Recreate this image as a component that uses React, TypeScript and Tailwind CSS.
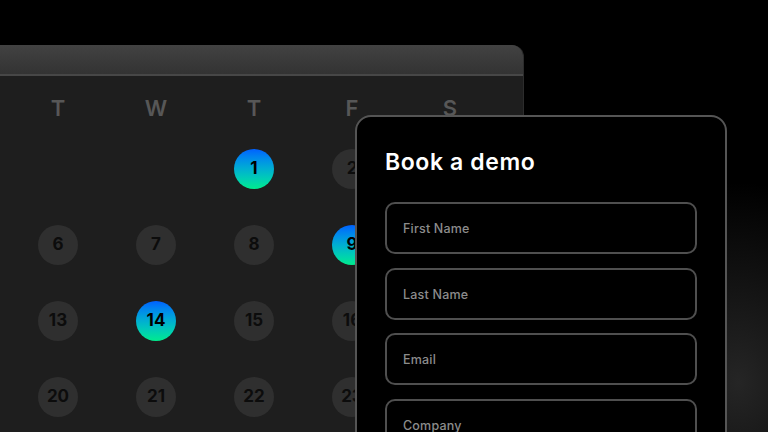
import React from "react";

const headers = ["T", "W", "T", "F", "S"];
type Cell = { n: number | null; hot?: boolean };
const rows: Cell[][] = [
  [{ n: null }, { n: null }, { n: 1, hot: true }, { n: 2 }],
  [{ n: 6 }, { n: 7 }, { n: 8 }, { n: 9, hot: true }],
  [{ n: 13 }, { n: 14, hot: true }, { n: 15 }, { n: 16 }],
  [{ n: 20 }, { n: 21 }, { n: 22 }, { n: 23 }],
];

const fields = ["First Name", "Last Name", "Email", "Company"];

export default function App() {
  return (
    <div
      className="relative w-[768px] h-[432px] overflow-hidden bg-black"
      style={{ fontFamily: "Inter, 'Noto Sans', sans-serif" }}
    >
      <div className="absolute right-[-120px] bottom-[-150px] w-[300px] h-[400px] rounded-full bg-[radial-gradient(closest-side,rgba(62,62,62,0.6),rgba(0,0,0,0))]" />
      {/* Calendar window */}
      <div className="relative mt-[45px] ml-[-20px] w-[544px] h-[400px] rounded-tr-[12px] overflow-hidden bg-[#1e1e1e] border-r border-[#2c2c2c]">
        <div className="h-[31px] bg-gradient-to-b from-[#424242] to-[#333333] border-b-2 border-[#474747]" />
        <div className="pl-[29px] pt-[20px]">
          <div className="grid grid-cols-[repeat(5,98px)]">
            {headers.map((h, i) => (
              <div key={i} className="h-[24px] flex items-center justify-center text-[22px] font-semibold text-[#575757] leading-none">
                {h}
              </div>
            ))}
          </div>
          <div className="mt-[11px] flex flex-col">
            {rows.map((r, ri) => (
              <div key={ri} className="grid grid-cols-[repeat(5,98px)] h-[76px] items-center">
                {r.map((c, ci) => (
                  <div key={ci} className="flex justify-center">
                    {c.n !== null && (
                      <div
                        className={
                          c.hot
                            ? "w-[40px] h-[40px] rounded-full flex items-center justify-center text-[17px] font-bold text-black bg-gradient-to-b from-[#0060ff] to-[#00eb8c]"
                            : "w-[40px] h-[40px] rounded-full flex items-center justify-center text-[17px] font-bold text-[#0c0c0c] bg-[#2f2f2f]"
                        }
                      >
                        {c.n}
                      </div>
                    )}
                  </div>
                ))}
              </div>
            ))}
          </div>
        </div>
      </div>

      {/* Form card */}
      <div className="absolute left-[355px] top-[115px] w-[372px] h-[360px] rounded-[16px] border-2 border-[#555555] bg-black pt-[31px] px-[28px]">
        <div className="text-[23px] leading-[28px] font-semibold text-white tracking-[0.6px]">Book a demo</div>
        <div className="mt-[26px] flex flex-col gap-[13.5px]">
          {fields.map((f) => (
            <div
              key={f}
              className="h-[52px] rounded-[10px] border-2 border-[#4f4f4f] flex items-center pl-[16px] pt-[3px] text-[12.5px] font-medium tracking-[0.2px] text-[#8c8c8c]"
            >
              {f}
            </div>
          ))}
        </div>
      </div>
    </div>
  );
}
